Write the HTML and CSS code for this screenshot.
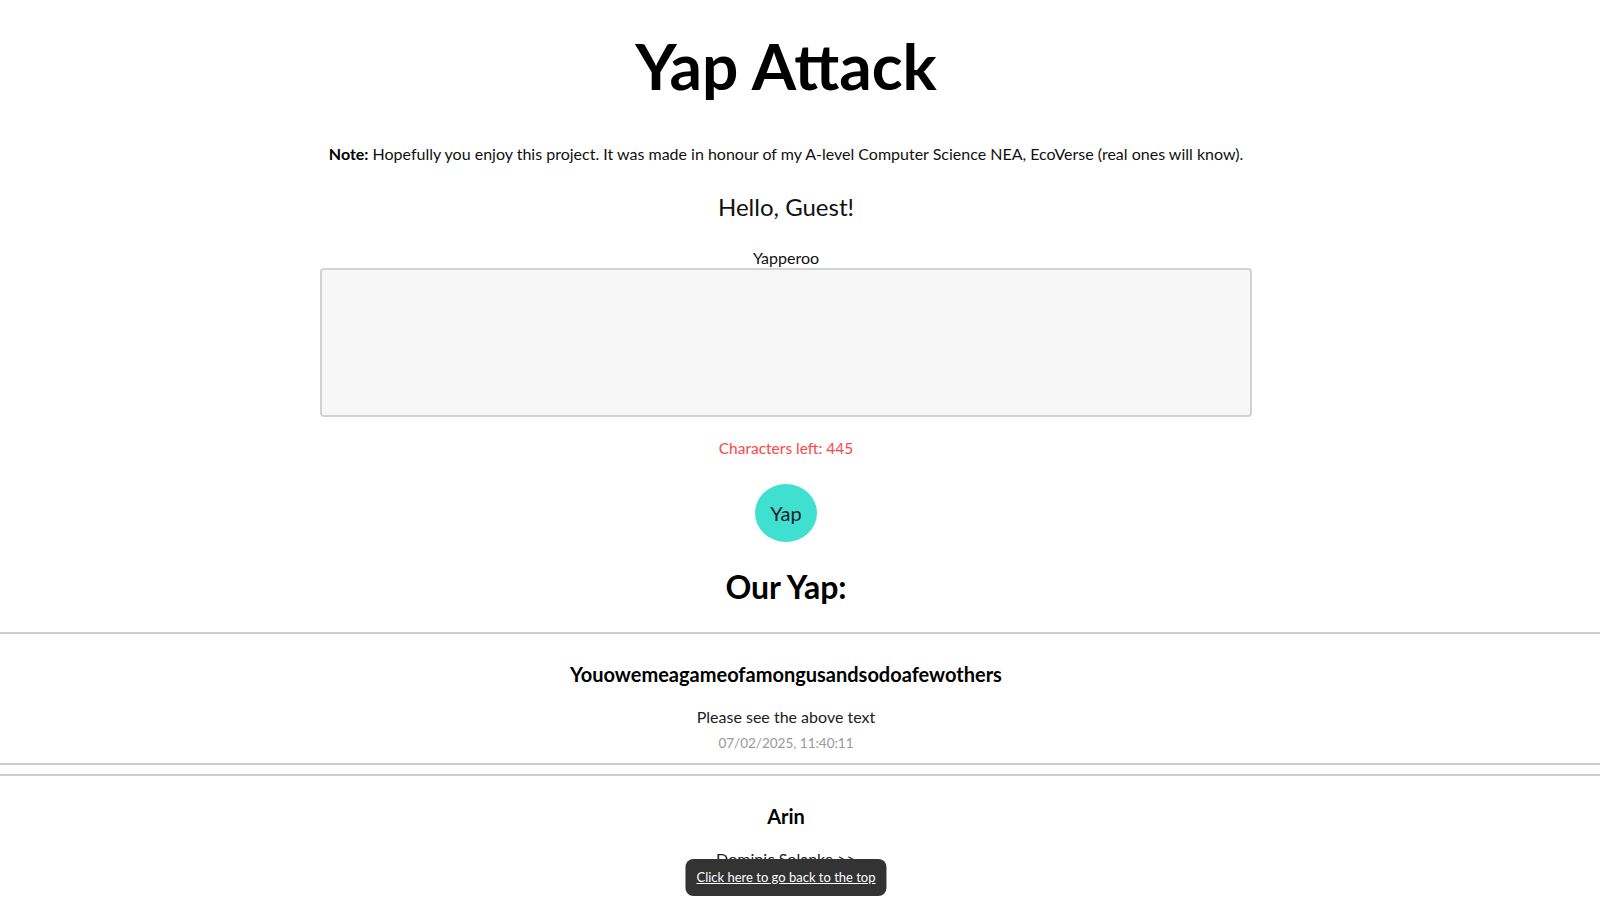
FILE: index.html
```html
<!DOCTYPE html>
<html lang="en">
<head>
<meta charset="utf-8">
<title>Yap Attack</title>
<link rel="stylesheet" href="styles.css">
</head>
<body>
<main class="top">
  <h1 class="title">Yap Attack</h1>
  <p class="note"><strong>Note:</strong> Hopefully you enjoy this project. It was made in honour of my A-level Computer Science NEA, EcoVerse (real ones will know).</p>
  <h2 class="hello">Hello, Guest!</h2>
  <form class="yap-form">
    <label class="label" for="yap">Yapperoo</label>
    <textarea id="yap" class="yap-input"></textarea>
    <p class="chars">Characters left: 445</p>
    <button type="button" class="yap-btn">Yap</button>
  </form>
  <h2 class="our">Our Yap:</h2>
</main>
<section class="posts">
  <article class="post">
    <h3 class="post-title">Youowemeagameofamongusandsodoafewothers</h3>
    <p class="post-body">Please see the above text</p>
    <div class="post-date">07/02/2025, 11:40:11</div>
  </article>
  <article class="post">
    <h3 class="post-title">Arin</h3>
    <p class="post-body">Dominic Solanke &gt;&gt;</p>
    <div class="post-date">07/02/2025, 11:38:52</div>
  </article>
</section>
<div class="back-top"><a href="#" class="back-link">Click here to go back to the top</a></div>
</body>
</html>
```
FILE: styles.css
```css
html {
  scrollbar-width: none;
}
html::-webkit-scrollbar {
  display: none;
}
body {
  margin: 0;
  font-family: "Lato", "Liberation Sans", sans-serif;
  color: #111;
  background: #fff;
}
.top {
  display: flex;
  flex-direction: column;
  align-items: center;
  padding-right: 28px;
}
.title {
  margin: 27px 0 0;
  font-size: 64px;
  line-height: 77px;
  font-weight: 700;
  color: #000;
}
.note {
  margin: 40px 0 0;
  font-size: 16px;
  line-height: 20px;
}
.note strong {
  color: #000;
}
.hello {
  margin: 28px 0 0;
  font-size: 24px;
  line-height: 29px;
  font-weight: 400;
}
.yap-form {
  display: flex;
  flex-direction: column;
  align-items: center;
}
.label {
  margin-top: 27px;
  font-size: 16px;
  line-height: 19px;
}
.yap-input {
  box-sizing: border-box;
  margin-top: 1px;
  width: 932px;
  height: 149px;
  background: #f7f7f7;
  border: 2px solid #d2d2d2;
  border-radius: 4px;
  resize: none;
  font-family: inherit;
}
.chars {
  margin: 22px 0 0;
  font-size: 15.5px;
  line-height: 19px;
  color: #ff4545;
}
.yap-btn {
  margin-top: 26px;
  width: 62px;
  height: 58px;
  border: none;
  border-radius: 50%;
  background: #40e0d0;
  color: #1c1c2a;
  font-family: inherit;
  font-size: 20px;
  padding: 0;
}
.our {
  margin: 26px 0 0;
  font-size: 32px;
  line-height: 38px;
  font-weight: 700;
  color: #000;
}
.posts {
  margin-top: 26px;
}
.post {
  border-top: 2px solid #cdcdcd;
  border-bottom: 2px solid #cdcdcd;
  padding: 28px 28px 11px 0;
  margin-bottom: 9px;
  text-align: center;
}
.post-title {
  margin: 0 0 21px;
  font-size: 20px;
  line-height: 24px;
  font-weight: 700;
  color: #000;
}
.post-body {
  margin: 0 0 8px;
  font-size: 16px;
  line-height: 20px;
  color: #222;
}
.post-date {
  font-size: 13.5px;
  line-height: 17px;
  color: #999;
}
.back-top {
  position: fixed;
  bottom: 4px;
  left: calc(50% - 14px);
  transform: translateX(-50%);
  background: #333;
  border-radius: 8px;
  padding: 10px 11px;
  font-size: 13px;
  line-height: 17px;
  white-space: nowrap;
}
.back-link {
  color: #fff;
  text-decoration: underline;
}
```
